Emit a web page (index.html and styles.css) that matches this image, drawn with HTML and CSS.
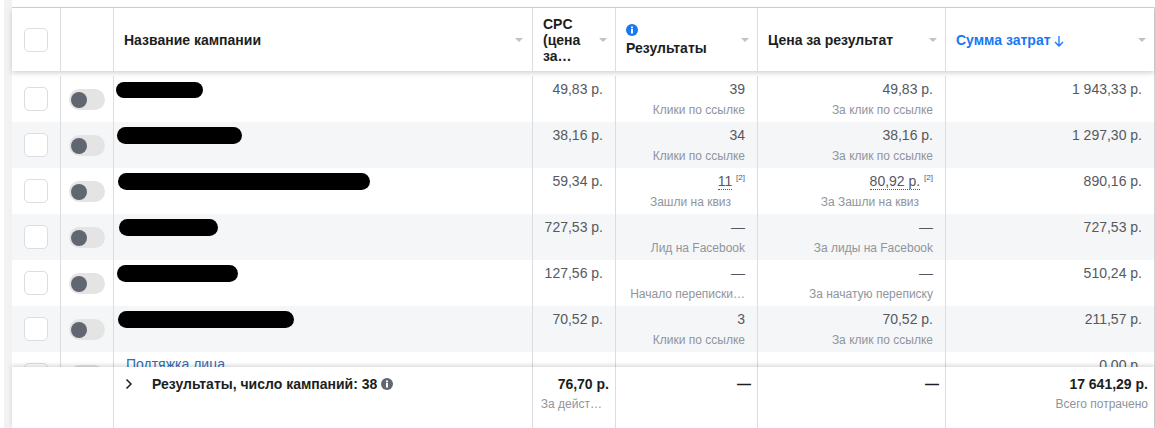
FILE: index.html
```html
<!DOCTYPE html>
<html lang="ru">
<head>
<meta charset="utf-8">
<title>Кампании</title>
<link rel="stylesheet" href="styles.css">
</head>
<body>
<div class="page">
  <div class="table">
    <div class="row head">
      <div class="cell"><span class="check"></span></div>
      <div class="cell"></div>
      <div class="cell hcell"><span class="hlabel">Название кампании</span><span class="caret"></span></div>
      <div class="cell hcell"><span class="hlabel narrow">CPC (цена за…</span><span class="caret"></span></div>
      <div class="cell hcell"><span class="hlabel stack">
        <svg class="info" viewBox="0 0 12 12"><circle cx="6" cy="6" r="6" fill="#1877f2"/><rect x="5" y="5" width="2" height="4.5" fill="#fff"/><rect x="5" y="2.5" width="2" height="1.8" fill="#fff"/></svg>
        Результаты</span><span class="caret"></span></div>
      <div class="cell hcell"><span class="hlabel">Цена за результат</span><span class="caret"></span></div>
      <div class="cell hcell"><span class="hlabel sorted">Сумма затрат
        <svg class="arrow" viewBox="0 0 10 12"><path d="M5 1v10M1 7l4 4 4-4" fill="none" stroke="#1877f2" stroke-width="1.3"/></svg></span><span class="caret"></span></div>
    </div>
    <div class="body">
      <div class="row item">
        <div class="cell"><span class="check"></span></div>
        <div class="cell"><span class="toggle"><span class="knob"></span></span></div>
        <div class="cell name"><span class="mask m1"></span></div>
        <div class="cell num"><div>49,83 р.</div></div>
        <div class="cell num"><div>39</div><div class="sub">Клики по ссылке</div></div>
        <div class="cell num"><div>49,83 р.</div><div class="sub">За клик по ссылке</div></div>
        <div class="cell num"><div>1 943,33 р.</div></div>
      </div>
      <div class="row item alt">
        <div class="cell"><span class="check"></span></div>
        <div class="cell"><span class="toggle"><span class="knob"></span></span></div>
        <div class="cell name"><span class="mask m2"></span></div>
        <div class="cell num"><div>38,16 р.</div></div>
        <div class="cell num"><div>34</div><div class="sub">Клики по ссылке</div></div>
        <div class="cell num"><div>38,16 р.</div><div class="sub">За клик по ссылке</div></div>
        <div class="cell num"><div>1 297,30 р.</div></div>
      </div>
      <div class="row item">
        <div class="cell"><span class="check"></span></div>
        <div class="cell"><span class="toggle"><span class="knob"></span></span></div>
        <div class="cell name"><span class="mask m3"></span></div>
        <div class="cell num"><div>59,34 р.</div></div>
        <div class="cell num"><div><span class="dotted">11</span> <sup>[2]</sup></div><div class="sub sub-q">Зашли на квиз</div></div>
        <div class="cell num"><div><span class="dotted">80,92 р.</span> <sup>[2]</sup></div><div class="sub sub-q">За Зашли на квиз</div></div>
        <div class="cell num"><div>890,16 р.</div></div>
      </div>
      <div class="row item alt">
        <div class="cell"><span class="check"></span></div>
        <div class="cell"><span class="toggle"><span class="knob"></span></span></div>
        <div class="cell name"><span class="mask m4"></span></div>
        <div class="cell num"><div>727,53 р.</div></div>
        <div class="cell num"><div>—</div><div class="sub">Лид на Facebook</div></div>
        <div class="cell num"><div>—</div><div class="sub">За лиды на Facebook</div></div>
        <div class="cell num"><div>727,53 р.</div></div>
      </div>
      <div class="row item">
        <div class="cell"><span class="check"></span></div>
        <div class="cell"><span class="toggle"><span class="knob"></span></span></div>
        <div class="cell name"><span class="mask m5"></span></div>
        <div class="cell num"><div>127,56 р.</div></div>
        <div class="cell num"><div>—</div><div class="sub">Начало переписки…</div></div>
        <div class="cell num"><div>—</div><div class="sub">За начатую переписку</div></div>
        <div class="cell num"><div>510,24 р.</div></div>
      </div>
      <div class="row item alt">
        <div class="cell"><span class="check"></span></div>
        <div class="cell"><span class="toggle"><span class="knob"></span></span></div>
        <div class="cell name"><span class="mask m6"></span></div>
        <div class="cell num"><div>70,52 р.</div></div>
        <div class="cell num"><div>3</div><div class="sub">Клики по ссылке</div></div>
        <div class="cell num"><div>70,52 р.</div><div class="sub">За клик по ссылке</div></div>
        <div class="cell num"><div>211,57 р.</div></div>
      </div>
      <div class="row item">
        <div class="cell"><span class="check"></span></div>
        <div class="cell"><span class="toggle"><span class="knob"></span></span></div>
        <div class="cell name link">Подтяжка лица</div>
        <div class="cell num"></div>
        <div class="cell num"></div>
        <div class="cell num"></div>
        <div class="cell num"><div>0,00 р.</div></div>
      </div>
    </div>
    <div class="row foot">
      <div class="cell blank"></div>
      <div class="cell"></div>
      <div class="cell summary">
        <svg class="chev" viewBox="0 0 8 12"><path d="M1.5 1.5L6 6l-4.500 4.500" fill="none" stroke="#1c1e21" stroke-width="1.500"/></svg>
        <span class="sumlabel">Результаты, число кампаний: 38</span>
        <svg class="ginfo" viewBox="0 0 12 12"><circle cx="6" cy="6" r="6" fill="#606770"/><rect x="5" y="5" width="2" height="4.500" fill="#fff"/><rect x="5" y="2.500" width="2" height="1.800" fill="#fff"/></svg>
      </div>
      <div class="cell ftot"><div>76,70 р.</div><div class="sub fsub">За дейст…</div></div>
      <div class="cell ftot"><div>—</div></div>
      <div class="cell ftot"><div>—</div></div>
      <div class="cell ftot"><div>17 641,29 р.</div><div class="sub">Всего потрачено</div></div>
    </div>
  </div>
</div>
</body>
</html>
```
FILE: styles.css
```css
* { box-sizing: border-box; }
html, body { margin: 0; padding: 0; background: #fff; }
body { width: 1155px; height: 428px; overflow: hidden; font-family: "Liberation Sans", Arial, sans-serif; font-size: 14px; color: #55595f; }
.page { height: 428px; margin-left: 4px; padding-left: 8px; padding-top: 7px; background: linear-gradient(#f2f2f2, #f2f2f2) left top / 8px 100% no-repeat; display: flex; flex-direction: column; }
.table { flex: 1; min-height: 0; display: flex; flex-direction: column; background: #fff; border-top: 1px solid #d3d3d3; border-right: 1px solid #d3d3d3; }
.row { display: grid; grid-template-columns: 49px 53px 419px 83px 142px 188px 208px; }
.cell { border-right: 1px solid #dadde1; min-width: 0; }
.cell:last-child { border-right: 0; }
.head { height: 63px; flex: none; position: relative; z-index: 2; box-shadow: 0 2px 5px rgba(0,0,0,.18); background: #fff; }
.head .cell { display: flex; align-items: center; }
.head .cell:first-child { padding-left: 12px; }
.hcell { padding: 1px 8px 0 10px; justify-content: space-between; font-weight: 700; color: #1c1e21; line-height: 16px; }
.head .cell:nth-child(3) { padding-right: 9px; }
.hlabel { display: block; }
.narrow { width: 46px; }
.stack .info { display: block; width: 12px; height: 12px; margin-bottom: 4px; }
.sorted { color: #1877f2; }
.arrow { width: 10px; height: 12px; vertical-align: -2px; }
.caret { width: 0; height: 0; border-left: 4px solid transparent; border-right: 4px solid transparent; border-top: 4px solid #bec3c9; flex: none; margin-left: 2px; }
.check { display: block; width: 24px; height: 24px; background: #fff; border: 1px solid #dadde1; border-radius: 5px; }
.body { flex: 1; min-height: 0; overflow: hidden; padding-top: 5px; }
.item { height: 46px; line-height: 16px; }
.alt { background: #f5f6f7; }
.item .cell:first-child { padding: 11px 0 0 12px; }
.item .cell:nth-child(2) { padding: 13px 0 0 8px; }
.toggle { display: block; width: 36px; height: 21px; border-radius: 11px; background: #e4e4e4; padding: 3px 2px; }
.knob { display: block; width: 16px; height: 16px; border-radius: 50%; background: #606770; }
.name { padding: 6px 0 0 2px; }
.mask { display: block; height: 16px; background: #000; border-radius: 8px; }
.m1 { width: 87px; }
.m2 { width: 125px; height: 17px; margin: -1px 0 0 1px; border-radius: 9px; }
.m3 { width: 252px; height: 17px; margin: -1px 0 0 2px; border-radius: 9px; }
.m4 { width: 99px; height: 17px; margin: -1px 0 0 3px; border-radius: 9px; }
.m5 { width: 121px; height: 17px; margin: -1px 0 0 1px; border-radius: 9px; }
.m6 { width: 176px; height: 17px; margin: -1px 0 0 2px; border-radius: 9px; }
.item .link { padding: 4px 0 0 12px; color: #2f6db5; font-size: 14px; }
.num { padding: 5px 12px 0 0; text-align: right; }
.sub { margin-top: 5px; font-size: 12px; line-height: 16px; color: #90949c; white-space: nowrap; }
.sub-q { padding-right: 14px; }
sup { font-size: 8px; line-height: 0; }
.dotted { border-bottom: 1px dotted #55595f; }
.foot { height: 61px; flex: none; position: relative; z-index: 2; background: #fff; box-shadow: 0 -2px 4px rgba(0,0,0,.14); line-height: 16px; }
.blank { border-right: 0; }
.summary { display: flex; align-items: flex-start; padding: 9px 0 0 11px; font-weight: 700; color: #1c1e21; }
.chev { width: 8px; height: 12px; margin-top: 2px; }
.sumlabel { margin-left: 19px; }
.ginfo { width: 12px; height: 12px; margin: 2px 0 0 4px; }
.ftot { padding: 9px 6px 0 0; text-align: right; font-weight: 700; color: #1c1e21; }
.ftot .sub { font-weight: 400; margin-top: 4px; }
.ftot .fsub { padding-right: 7px; }
```
